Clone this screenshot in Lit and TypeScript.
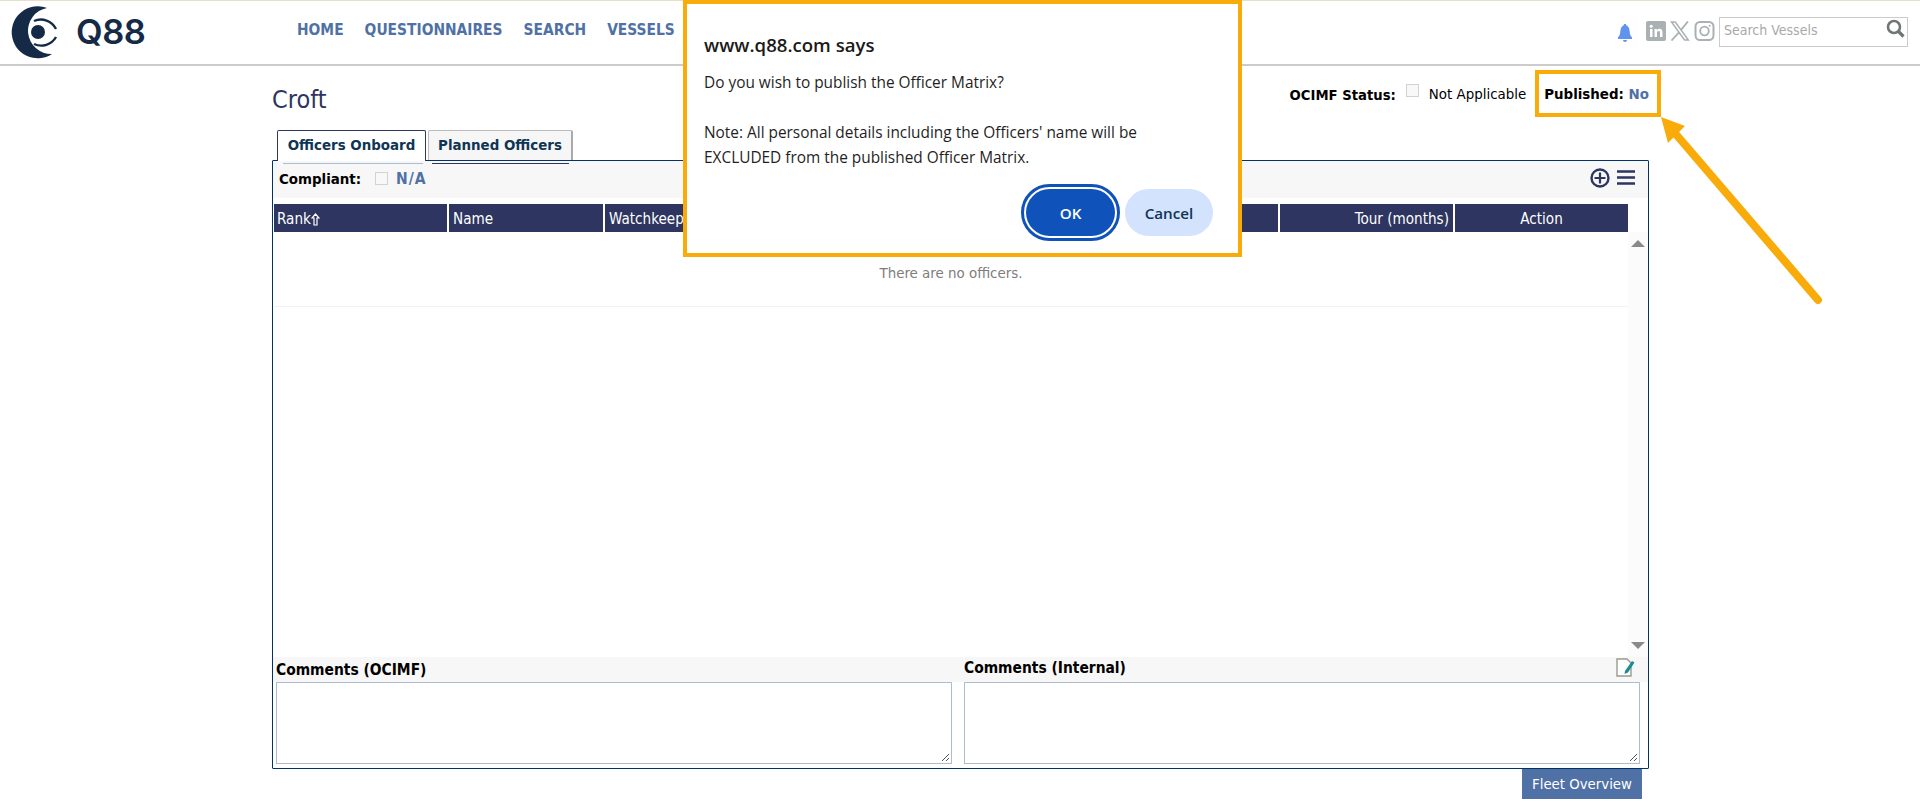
import { LitElement, html, css } from "lit";
import { customElement } from "lit/decorators.js";

@customElement("app-root")
export class AppRoot extends LitElement {
  static styles = css`
    :host { display: block; position: relative; width: 1920px; height: 802px; overflow: hidden; background: #fff;
      font-family: "DejaVu Sans Condensed", "DejaVu Sans", sans-serif; font-stretch: condensed; font-size: 14.9px; color: #000; }
    * { box-sizing: border-box; }
    .top { height: 66px; border-top: 1px solid #e3e2c6; border-bottom: 2px solid #ccc; display: flex; align-items: flex-start; }
    .logo { width: 55px; height: 54px; margin: 4px 0 0 9px; flex: none; overflow: visible; }
    .brand { font: 600 34.5px/1 "Inter", sans-serif; color: #152a47; margin: 14px 0 0 12px; width: 221px; letter-spacing: -0.5px; }
    nav { display: flex; gap: 21px; margin-top: 20px; font-weight: 700; font-size: 15.4px; line-height: 18px; color: #4f71a5; }
    .tools { margin-left: auto; display: flex; align-items: flex-start; padding-right: 12px; }
    .bell { margin: 23px 14px 0 0; }
    .soc { margin: 20px 4px 0 0; display: block; }
    .search { width: 189px; height: 30px; border: 1px solid #ccc; margin-top: 16px; position: relative; padding: 2px 4px; font-size: 14px; line-height: 20px; color: #a9a9a9; display: flex; justify-content: space-between; }
    .main { margin-left: 272px; width: 1377px; }
    .head { height: 64px; display: flex; align-items: flex-start; }
    h1 { margin: 19px 0 0 0; font-weight: 400; font-size: 25px; line-height: 30px; color: #2d3560; }
    .status { margin-left: auto; display: flex; align-items: center; height: 20px; margin-top: 18px; white-space: nowrap; }
    .status b { margin-right: 10px; font-size: 14.7px; }
    .status .na { margin-left: 10px; }
    .pub { margin-left: 18px; font-weight: 700; }
    .pub span { color: #4f71a5; }
    .cb { width: 13px; height: 13px; border: 1px solid #d2d2d2; background: #f8f8f8; display: inline-block; flex: none; }
    .status .cb { margin-top: -8px; }
    .tabs { display: flex; padding-left: 5px; gap: 2px; height: 30px; position: relative; z-index: 1; }
    .tab { width: 149px; height: 31px; border: 1px solid #2d3560; border-bottom: none; background: #fff; border-radius: 2px 2px 0 0; text-align: center; font-weight: 700; font-size: 14.9px; line-height: 29px; color: #0f3554; }
    .tab.off { width: 145px; height: 30px; background: #f6f6f6; border: 1px solid #bbb; border-right: 2px solid #aaa; border-bottom: none; }
    .panel { height: 609px; border: 1px solid #003366; border-radius: 1px; position: relative; display: flex; flex-direction: column; }
    .tabline { position: absolute; height: 1px; top: 2px; }
    .l1 { left: 10px; width: 140px; background: #a8bcd4; }
    .l2 { left: 159px; width: 137px; background: #2d3560; }
    .bar { height: 37px; background: #f7f7f7; display: flex; align-items: center; padding: 0 13px 2px 6px; font-weight: 700; }
    .bar .cb { margin: 0 8px 0 14px; }
    .bar .na { color: #4f71a5; letter-spacing: 1px; font-size: 15.5px; }
    .bar .ico { margin-left: auto; display: flex; gap: 6px; align-items: center; margin-top: -2px; }
    .bar .ico svg:first-child { margin-right: 1px; }
    .thead { margin: 6px 0 0 1px; width: 1354px; height: 28px; display: grid; grid-template-columns: 173px 154px 673px 173px 173px; column-gap: 2px; color: #fff; font-size: 15.1px; line-height: 28px; }
    .thead div { background: #2d3560; padding: 2px 4px 0; white-space: nowrap; overflow: hidden; display: flex; align-items: center; }
    .thead div:first-child { padding-left: 3px; }
    .thead .r { justify-content: flex-end; }
    .thead .c { justify-content: center; }
    .body { flex: 1; display: flex; margin-left: 1px; min-height: 0; }
    .list { width: 1354px; }
    .empty { height: 75px; border-bottom: 1px solid #f2f2f2; padding-top: 31px; text-align: center; color: #807c7c; line-height: 20px; }
    .scroll { flex: 1; background: #fbfbfb; display: flex; flex-direction: column; justify-content: space-between; align-items: center; padding: 8px 0 8px; }
    .tri { width: 0; height: 0; border-left: 7px solid transparent; border-right: 7px solid transparent; }
    .up { border-bottom: 7px solid #8a8a8a; }
    .down { border-top: 7px solid #8a8a8a; }
    .comments { height: 111px; display: grid; grid-template-columns: 676px 676px; column-gap: 12px; padding: 0 8px 4px 3px; background: linear-gradient(#f7f7f7 25px, #fff 25px); }
    .cmt { display: flex; flex-direction: column; position: relative; }
    .cmt .lbl { height: 25px; font-weight: 700; font-size: 15.4px; line-height: 22px; display: flex; justify-content: space-between; }
    .cmt .lbl.a { padding-top: 2px; }
    .cmt .ta { flex: 1; border: 1px solid #afbccd; background: #fff; position: relative; }
    .grip { position: absolute; right: 1px; bottom: 1px; }
    .edit { margin: 1px 4px 0 0; }
    .foot { display: flex; justify-content: flex-end; padding-right: 7px; }
    .fleet { width: 120px; height: 30px; background: #4f71a5; color: #fff; text-align: center; line-height: 30px; font-size: 14.8px; }
    .pubbox { position: absolute; left: 1535px; top: 70px; width: 126px; height: 47px; border: 4px solid #f9ab0a; }
    .arrow { position: absolute; left: 1650px; top: 110px; }
    .dlg { position: absolute; left: 683px; top: 0; width: 559px; height: 257px; background: #fff; border: 4px solid #f9ab0a; padding: 0 17px;
      font-family: "Open Sans", sans-serif; font-stretch: normal; color: #1f1f1f; }
    .dlg h2 { margin: 28px 0 0 0; font-size: 18.6px; font-weight: 600; line-height: 26px; color: #1a1a1a; white-space: nowrap; }
    .dlg p { margin: 12px 0 0 0; font-size: 15.4px; line-height: 25px; white-space: nowrap; }
    .btns { display: flex; justify-content: flex-end; gap: 5px; margin-top: 14px; padding-right: 8px; align-items: center; }
    button { font: 600 15.2px "Open Sans", sans-serif; border: none; border-radius: 24px; padding: 0; }
    .ok { width: 99px; height: 57px; color: #fff; border: 3px solid #0f52ba; padding: 2px; background: #0f52ba content-box; border-radius: 29px; }
    .cancel { width: 88px; height: 47px; background: #d3e3fd; color: #0f3554; font-weight: 600; }
  `;

  render() {
    return html`
      <div class="top">
        <svg class="logo" viewBox="0 0 55 54">
          <path fill="#152a47" d="M38 3 A26 26 0 1 0 43 49 A23.200 23.200 0 0 1 38 3Z"/>
          <path fill="none" stroke="#152a47" stroke-width="2.400" d="M25 16 A17 17 0 0 1 47 24 M25 39 A17 17 0 0 0 47 32"/>
          <circle cx="29" cy="27" r="7" fill="#152a47"/>
        </svg>
        <div class="brand">Q88</div>
        <nav><span>HOME</span><span>QUESTIONNAIRES</span><span>SEARCH</span><span>VESSELS</span></nav>
        <div class="tools">
          <svg class="bell" width="14" height="18" viewBox="0 0 14 18"><path fill="#5f93ee" d="M7 0c1 0 1.400.6 1.500 1.500C11 2.500 11.500 5 11.700 8c.2 2.500 1 4 2.300 5.500V15H0v-1.500C1.300 12 2.100 10.500 2.300 8 2.500 5 3 2.500 5.500 1.500 5.600.6 6 0 7 0zM5 16h4c0 1.300-1 2-2 2s-2-.7-2-2z"/></svg>
          <svg class="soc" width="20" height="20" viewBox="0 0 20 20"><rect width="20" height="20" rx="2" fill="#a9b1b3"/><rect x="4" y="8" width="2.500" height="8" fill="#fff"/><circle cx="5.200" cy="5.200" r="1.500" fill="#fff"/><path fill="#fff" d="M8.500 8H11v1.200C11.600 8.300 12.500 7.800 13.600 7.800c2 0 2.900 1.300 2.900 3.400V16H14v-4.300c0-1-.4-1.700-1.300-1.700-1 0-1.700.7-1.700 1.800V16H8.500z"/></svg>
          <svg class="soc" width="20" height="20" viewBox="0 0 20 20"><path fill="none" stroke="#a9b1b3" stroke-width="1.500" d="M1.500 1h3.800l13 18h-3.800z"/><path stroke="#a9b1b3" stroke-width="1.800" d="M18 .5 11 8.800M9 11.300 1.500 19.500"/></svg>
          <svg class="soc" width="21" height="20" viewBox="0 0 21 20"><rect x="1.500" y="1" width="18" height="18" rx="4.500" fill="none" stroke="#a9b1b3" stroke-width="2"/><circle cx="10.500" cy="10" r="4.300" fill="none" stroke="#a9b1b3" stroke-width="1.800"/><circle cx="15.700" cy="4.800" r="1" fill="#a9b1b3"/></svg>
          <div class="search"><span>Search Vessels</span>
            <svg width="19" height="19" viewBox="0 0 19 19" style="margin:-1px -2px 0 0"><circle cx="8" cy="8" r="6" fill="none" stroke="#6f7674" stroke-width="2.600"/><path d="M12.500 12.500 17.500 17.500" stroke="#6f7674" stroke-width="3.200"/></svg>
          </div>
        </div>
      </div>
      <div class="main">
        <div class="head">
          <h1>Croft</h1>
          <div class="status">
            <b>OCIMF Status:</b><span class="cb"></span><span class="na">Not Applicable</span>
            <span class="pub">Published: <span>No</span></span>
          </div>
        </div>
        <div class="tabs"><div class="tab">Officers Onboard</div><div class="tab off">Planned Officers</div></div>
        <div class="panel">
          <div class="tabline l1"></div><div class="tabline l2"></div>
          <div class="bar"><span>Compliant:</span><span class="cb"></span><span class="na">N/A</span>
            <span class="ico">
              <svg width="20" height="20" viewBox="0 0 20 20"><circle cx="10" cy="10" r="8.500" fill="none" stroke="#2d3560" stroke-width="2.400"/><path d="M10 4.500v11M4.500 10h11" stroke="#2d3560" stroke-width="2.200"/></svg>
              <svg width="18" height="15" viewBox="0 0 18 15"><path d="M0 1.500h18M0 7.500h18M0 13.500h18" stroke="#2d3560" stroke-width="2.400"/></svg>
            </span>
          </div>
          <div class="thead">
            <div>Rank<svg width="9" height="13" viewBox="0 0 9 13"><path d="M4.500 1 1 5h2v7h3V5h2z" fill="none" stroke="#fff" stroke-width="1.200"/></svg></div>
            <div>Name</div><div>Watchkeeping</div><div class="r">Tour (months)</div><div class="c">Action</div>
          </div>
          <div class="body">
            <div class="list"><div class="empty">There are no officers.</div></div>
            <div class="scroll"><div class="tri up"></div><div class="tri down"></div></div>
          </div>
          <div class="comments">
            <div class="cmt"><div class="lbl a">Comments (OCIMF)</div><div class="ta">${this.grip()}</div></div>
            <div class="cmt"><div class="lbl"><span>Comments (Internal)</span>
              <svg class="edit" width="20" height="19" viewBox="0 0 20 19"><path d="M1 1h10l4 4v13H1z" fill="#fff" stroke="#9a9a8e" stroke-width="1.400"/><path d="M9 13 16 3l2.500 1.500-6.500 10L8.500 16z" fill="#1d8a94"/></svg>
            </div><div class="ta">${this.grip()}</div></div>
          </div>
        </div>
        <div class="foot"><div class="fleet">Fleet Overview</div></div>
      </div>
      <div class="pubbox"></div>
      <svg class="arrow" width="180" height="200" viewBox="1650 110 180 200">
        <path d="M1818 300 1674 132" stroke="#f9ab0a" stroke-width="8" stroke-linecap="round" fill="none"/>
        <path d="M1661 117 1685 126 1668 143z" fill="#f9ab0a"/>
      </svg>
      <div class="dlg">
        <h2>www.q88.com says</h2>
        <p>Do you wish to publish the Officer Matrix?<br><br>Note: All personal details including the Officers' name will be<br>EXCLUDED from the published Officer Matrix.</p>
        <div class="btns"><button class="ok">OK</button><button class="cancel">Cancel</button></div>
      </div>
    `;
  }

  grip() {
    return html`<svg class="grip" width="9" height="9" viewBox="0 0 9 9"><path d="M8 1 1 8M8 5 5 8" stroke="#555" stroke-width="1"/></svg>`;
  }
}
